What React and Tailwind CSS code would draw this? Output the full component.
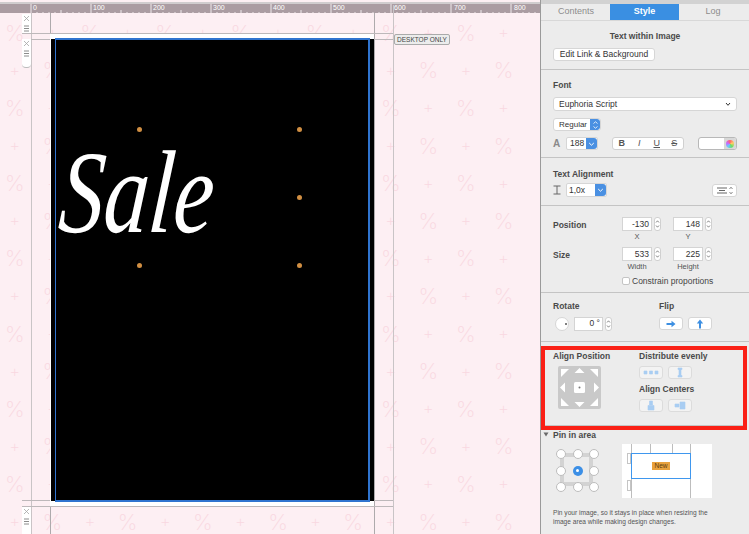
const font = { fontFamily: '"Liberation Sans", Arial, sans-serif' };

const Pattern = () => {
  const cells = [];
  for (let r = 0; r < 14; r++) {
    for (let c = 0; c < 14; c++) {
      cells.push((r + c) % 2 === 0 ? "%" : "+");
    }
  }
  return (
    <div
      className="absolute left-[-4px] top-[14px] grid grid-cols-[repeat(14,37.6px)] auto-rows-[37.6px] place-items-center font-extralight text-[#f9d8e1]"
      style={{ fontFamily: 'Inter, sans-serif' }}
    >
      {cells.map((ch, i) => (
        <span key={i} className={`leading-none ${ch === "%" ? "text-[22px]" : "text-[17px]"}`}>
          {ch}
        </span>
      ))}
    </div>
  );
};

const Ruler = () => {
  const labels = [0, 100, 200, 300, 400, 500, 600, 700, 800];
  const ticks = [];
  for (let i = 0; i < 90; i++) ticks.push(i);
  return (
    <div className="absolute left-0 top-[2px] h-[11px] w-[540px] overflow-hidden border-t-2 border-[#d0ccce] bg-[#ab9ca2]">
      <svg width="540" height="10" className="absolute left-0 top-0">
        {ticks.map((i) => (
          <line
            key={i}
            x1={31 + i * 6}
            x2={31 + i * 6}
            y1={i % 10 === 0 ? 0 : i % 5 === 0 ? 6 : 8}
            y2="10"
            stroke="#efe9eb"
            strokeWidth="1"
          />
        ))}
      </svg>
      {labels.map((l) => (
        <span
          key={l}
          className={`absolute top-0 text-[7px] leading-[7px] text-white ${
            l === 0 ? "left-[33px]" : l === 100 ? "left-[93px]" : l === 200 ? "left-[153px]" : l === 300 ? "left-[213px]" : l === 400 ? "left-[273px]" : l === 500 ? "left-[333px]" : l === 600 ? "left-[394px]" : l === 700 ? "left-[454px]" : "left-[514px]"
          }`}
        >
          {l}
        </span>
      ))}
    </div>
  );
};

const Handle = ({ className }) => (
  <div className={`absolute left-[22px] flex w-[9px] flex-col items-center bg-white text-[#8a8a8a] ${className}`}>
    <svg width="7" height="7" viewBox="0 0 7 7" className="mt-[1px]">
      <path d="M1 1l5 5M6 1L1 6" stroke="#a5a5a5" strokeWidth="0.8" />
    </svg>
    <svg width="7" height="7" viewBox="0 0 7 7" className="mt-[3px]">
      <path d="M1 1h5M1 3.5h5M1 6h5" stroke="#8c8c8c" strokeWidth="1" />
    </svg>
  </div>
);

const Canvas = () => (
  <div className="relative h-[534px] w-[540px] overflow-hidden bg-[#fdeff3]">
    <Pattern />
    <Ruler />
    {/* guide lines */}
    <div className="absolute left-[31px] top-[13px] h-[521px] w-px bg-[#c9c4c6]" />
    <div className="absolute left-[393px] top-[5px] h-[529px] w-px bg-[#c9c4c6]" />
    <div className="absolute left-[50px] top-[13px] h-[521px] w-px bg-[#aeaaac]" />
    <div className="absolute left-[374px] top-[13px] h-[521px] w-px bg-[#aeaaac]" />
    <div className="absolute left-[22px] top-[33px] h-px w-[371px] bg-[#bdb8ba]" />
    <div className="absolute left-[22px] top-[39px] h-px w-[371px] bg-[#bdb8ba]" />
    <div className="absolute left-[22px] top-[500px] h-px w-[371px] bg-[#bdb8ba]" />
    <div className="absolute left-[22px] top-[506px] h-px w-[371px] bg-[#bdb8ba]" />
    {/* image area */}
    <div className="absolute left-[50px] top-[34px] h-[472px] w-[324px] bg-white" />
    <div className="absolute left-[51px] top-[39px] h-[462px] w-[323px] bg-black" />
    <div className="absolute left-[55px] top-[38px] h-[464px] w-[315px] border-t-2 border-r-2 border-b-2 border-l border-[#2f74cf]" />
    <span
      className="absolute left-[60px] top-[118px] origin-left -skew-x-6 scale-x-[0.76] text-[118px] leading-[150px] text-white italic"
      style={{ fontFamily: '"Liberation Serif", serif' }}
    >
      Sale
    </span>
    {[
      "left-[137px] top-[127px]",
      "left-[297px] top-[127px]",
      "left-[297px] top-[195px]",
      "left-[137px] top-[263px]",
      "left-[297px] top-[263px]",
    ].map((c) => (
      <div key={c} className={`absolute h-[5px] w-[5px] rounded-full bg-[#d18f43] ${c}`} />
    ))}
    <Handle className="top-[14px] h-[19px]" />
    <Handle className="top-[39px] h-[29px] rounded-b-sm border-b border-[#bbb]" />
    <Handle className="top-[507px] h-[27px]" />
    <div className="absolute left-[394px] top-[34px] flex h-[11px] w-[56px] items-center justify-center rounded-[2px] border border-[#aaa] bg-[#ececec] text-[6.5px] text-[#444]">
      DESKTOP ONLY
    </div>
  </div>
);

const Label = ({ children, className = "" }) => (
  <div className={`text-[8.5px] leading-[10px] font-bold text-[#4a4a4a] ${className}`}>{children}</div>
);

const Field = ({ value, className = "" }) => (
  <div className={`flex h-[14px] items-center justify-end border border-[#d4d4d4] bg-white pr-[2px] text-[8.5px] text-[#333] ${className}`}>
    {value}
  </div>
);

const Stepper = () => (
  <div className="ml-[2px] flex h-[14px] w-[7px] flex-col items-center justify-center rounded-[3px] border border-[#d0d0d0] bg-white">
    <svg width="5" height="10" viewBox="0 0 5 10">
      <path d="M1 3.5L2.5 1.8 4 3.5M1 6.5L2.5 8.2 4 6.5" fill="none" stroke="#555" strokeWidth="0.7" />
    </svg>
  </div>
);

const BlueCap = ({ w = "w-[11px]", updown }) => (
  <div className={`flex h-full ${w} items-center justify-center rounded-r-[3px] bg-[#4a90e2]`}>
    <svg width="7" height="10" viewBox="0 0 7 10">
      {updown ? (
        <path d="M1.5 3.5L3.5 1.8l2 1.7M1.5 6.5l2 1.7 2-1.7" fill="none" stroke="#fff" strokeWidth="0.8" />
      ) : (
        <path d="M1.2 4l2.3 2.2L5.8 4" fill="none" stroke="#fff" strokeWidth="1" />
      )}
    </svg>
  </div>
);

const WhiteBtn = ({ children, className = "" }) => (
  <div className={`flex items-center justify-center rounded-[3px] border border-[#d6d6d6] bg-white ${className}`}>
    {children}
  </div>
);

const AlignGrid = () => (
  <div className="ml-[5px] mt-[5px] h-[43px] w-[43px] rounded-[2px] bg-[#c9c9c9]">
    <svg width="43" height="43" viewBox="0 0 43 43">
      <g fill="#fff">
        <path d="M3 3h8l-8 8zM40 3h-8l8 8zM3 40h8l-8-8zM40 40h-8l8-8z" />
        <path d="M21.5 2l5 5h-10zM21.5 41l5-5h-10zM2 21.5l5-5v10zM41 21.5l-5-5v10z" />
        <rect x="16" y="16" width="11" height="11" rx="1.5" />
      </g>
      <circle cx="21.5" cy="21.5" r="1" fill="#777" />
    </svg>
  </div>
);

const DistBtn = ({ d }) => (
  <WhiteBtn className="h-[13px] w-[24px] border-[#dcdcdc] !bg-[#f3f3f3]">
    <svg width="16" height="11" viewBox="0 0 16 11">
      <path d={d} fill="#a9cdf2" stroke="#a9cdf2" strokeWidth="0.6" />
    </svg>
  </WhiteBtn>
);

const PinGrid = () => (
  <div className="relative h-[42px] w-[42px]">
    <div className="absolute left-[4px] top-[4px] h-[33px] w-[33px] border-[4px] border-[#d3d3d3]" />
    <div className="relative grid grid-cols-[repeat(3,9px)] auto-rows-[9px] gap-[7.5px]">
      {[0, 1, 2, 3, 4, 5, 6, 7, 8].map((i) =>
        i === 4 ? (
          <div key={i} className="flex h-[10px] w-[10px] items-center justify-center rounded-full bg-[#3c8fe6]">
            <div className="h-[3px] w-[3px] rounded-full bg-white" />
          </div>
        ) : (
          <div key={i} className="h-[10px] w-[10px] rounded-full border border-[#bdbdbd] bg-white" />
        )
      )}
    </div>
  </div>
);

const PinPreview = () => (
  <div className="relative h-[54px] w-[90px] bg-white">
    <div className="absolute left-[9px] top-0 h-full w-px bg-[#bdbdbd]" />
    <div className="absolute left-[68px] top-0 h-full w-px bg-[#bdbdbd]" />
    <div className="absolute left-[28px] top-0 h-[9px] w-px bg-[#bdbdbd]" />
    <div className="absolute left-[50px] top-0 h-[9px] w-px bg-[#bdbdbd]" />
    <div className="absolute left-[5px] top-[9px] h-[11px] w-[4px] border border-[#c5c5c5]" />
    <div className="absolute left-[5px] top-[36px] h-[11px] w-[4px] border border-[#c5c5c5]" />
    <div className="absolute left-[9px] top-[9px] flex h-[26px] w-[60px] items-center justify-center border border-[#3f97ee]">
      <span className="bg-[#e8a13d] px-[2px] text-[6.5px] leading-[8px] text-[#5a3c10]">New</span>
    </div>
  </div>
);

const Panel = () => (
  <div className="h-[534px] w-[209px] overflow-hidden border-l border-[#9a9a9a] bg-[#ececec] text-[#444]">
    {/* tabs */}
    <div className="flex h-[21px] border-t-[4px] border-b border-t-[#d2d2d2] border-b-[#d8d8d8] pl-px text-[9px]">
      <div className="flex w-[68px] items-center justify-center text-[#8c8c8c]">Contents</div>
      <div className="flex w-[69px] items-center justify-center bg-[#3a8fe2] font-bold text-white">Style</div>
      <div className="flex w-[68px] items-center justify-center text-[#8c8c8c]">Log</div>
    </div>

    {/* text within image */}
    <div className="h-[49px] border-b border-[#c4c4c4] pl-[12px] pt-[10px]">
      <Label className="w-[184px] text-center">Text within Image</Label>
      <WhiteBtn className="mt-[7px] h-[13px] w-[102px] text-[8.5px] text-[#333]">Edit Link &amp; Background</WhiteBtn>
    </div>

    {/* font */}
    <div className="h-[88px] border-b border-[#c4c4c4] pl-[12px] pt-[10px]">
      <Label>Font</Label>
      <WhiteBtn className="mt-[7px] h-[14px] w-[184px] !justify-between px-[5px] text-[8.5px] text-[#333]">
        <span>Euphoria Script</span>
        <svg width="6" height="5" viewBox="0 0 6 5">
          <path d="M1 1l2 2.3L5 1" fill="none" stroke="#333" strokeWidth="1" />
        </svg>
      </WhiteBtn>
      <div className="mt-[7px] flex h-[13px] w-[48px] items-center overflow-hidden rounded-[3px] border border-[#d6d6d6] bg-white pl-[5px] text-[8px] text-[#333]">
        <span className="flex-1">Regular</span>
        <BlueCap w="w-[10px]" updown />
      </div>
      <div className="mt-[6px] flex h-[13px] items-center">
        <span className="w-[13px] text-[10px] font-bold text-[#8a8a8a]">A</span>
        <div className="flex h-[13px] w-[32px] items-center overflow-hidden rounded-[2px] border border-[#d6d6d6] bg-white pl-[3px] text-[8.5px] text-[#333]">
          <span className="flex-1">188</span>
          <BlueCap />
        </div>
        <div className="ml-[14px] flex h-[13px] w-[72px] items-center rounded-[3px] border border-[#d0d0d0] bg-white text-[9px] text-[#555]">
          <span className="flex-1 text-center font-bold">B</span>
          <span className="flex-1 text-center italic">I</span>
          <span className="flex-1 text-center underline">U</span>
          <span className="flex-1 text-center line-through">S</span>
        </div>
        <div className="ml-[14px] flex h-[13px] w-[39px] items-center overflow-hidden rounded-[3px] border border-[#b8b8b8] bg-white">
          <div className="flex-1" />
          <div className="flex h-full w-[12px] items-center justify-center bg-[#d8d8d8]">
            <div className="h-[8px] w-[8px] rounded-full bg-[conic-gradient(#f66,#fc6,#6d6,#6cf,#c6f,#f66)]" />
          </div>
        </div>
      </div>
    </div>

    {/* text alignment */}
    <div className="h-[48px] border-b border-[#c4c4c4] pl-[12px] pt-[11px]">
      <Label>Text Alignment</Label>
      <div className="mt-[4px] flex h-[14px] items-center">
        <svg width="13" height="10" viewBox="0 0 13 10" className="shrink-0">
          <path d="M0.5 1h7M0.5 9h7M4 1v8" stroke="#666" strokeWidth="1" fill="none" />
        </svg>
        <div className="flex h-[14px] w-[41px] items-center overflow-hidden rounded-[2px] border border-[#d6d6d6] bg-white pl-[2px] text-[8.5px] text-[#333]">
          <span className="flex-1">1,0x</span>
          <BlueCap />
        </div>
        <WhiteBtn className="ml-[105px] h-[13px] w-[25px] gap-[2px]">
          <svg width="10" height="7" viewBox="0 0 10 7">
            <path d="M0 1h10M2 3.5h6M0 6h10" stroke="#666" strokeWidth="1.2" />
          </svg>
          <svg width="4" height="9" viewBox="0 0 4 9">
            <path d="M0.5 3L2 1.2 3.5 3M0.5 6L2 7.8 3.5 6" fill="none" stroke="#555" strokeWidth="0.7" />
          </svg>
        </WhiteBtn>
      </div>
    </div>

    {/* position and size */}
    <div className="h-[87px] border-b border-[#c4c4c4] pl-[12px] pt-[11px]">
      <div className="flex">
        <Label className="w-[69px] pt-[3px]">Position</Label>
        <div>
          <div className="flex">
            <Field value="-130" className="w-[30px]" />
            <Stepper />
            <Field value="148" className="ml-[12px] w-[30px]" />
            <Stepper />
          </div>
          <div className="mt-[1px] flex text-[7.5px] leading-[10px] text-[#555]">
            <span className="w-[30px] text-center">X</span>
            <span className="ml-[21px] w-[30px] text-center">Y</span>
          </div>
        </div>
      </div>
      <div className="mt-[5px] flex">
        <Label className="w-[69px] pt-[3px]">Size</Label>
        <div>
          <div className="flex">
            <Field value="533" className="w-[30px]" />
            <Stepper />
            <Field value="225" className="ml-[12px] w-[30px]" />
            <Stepper />
          </div>
          <div className="mt-[1px] flex text-[7.5px] leading-[10px] text-[#555]">
            <span className="w-[30px] text-center">Width</span>
            <span className="ml-[21px] w-[30px] text-center">Height</span>
          </div>
          <div className="mt-[4px] flex items-center gap-[2px] text-[8.5px] leading-[10px] text-[#444]">
            <div className="h-[8px] w-[8px] rounded-[2px] border border-[#c4c4c4] bg-white" />
            <span>Constrain proportions</span>
          </div>
        </div>
      </div>
    </div>

    {/* rotate and flip */}
    <div className="h-[49px] border-b border-[#c4c4c4] pl-[12px] pt-[8px]">
      <div className="flex">
        <Label className="w-[106px]">Rotate</Label>
        <Label>Flip</Label>
      </div>
      <div className="mt-[5px] flex h-[15px] items-center">
        <div className="ml-[2px] flex h-[14px] w-[14px] items-center justify-end rounded-full border border-[#d6d6d6] bg-white pr-[1px]">
          <div className="h-[2px] w-[2px] rounded-full bg-[#555]" />
        </div>
        <Field value="0 °" className="ml-[5px] w-[29px]" />
        <Stepper />
        <WhiteBtn className="ml-[47px] h-[13px] w-[24px]">
          <svg width="10" height="8" viewBox="0 0 10 8">
            <path d="M0.5 3h5V0.8L9.5 4l-4 3.2V5h-5z" fill="#3d8fe2" />
          </svg>
        </WhiteBtn>
        <WhiteBtn className="ml-[5px] h-[13px] w-[24px]">
          <svg width="8" height="10" viewBox="0 0 8 10">
            <path d="M3 9.5v-5H0.8L4 0.5l3.2 4H5v5z" fill="#3d8fe2" />
          </svg>
        </WhiteBtn>
      </div>
    </div>

    {/* align, highlighted in red */}
    <div className="mt-[4px] h-[84px] w-[206px] border-[4px] border-[#fa2016]">
      <div className="flex h-full border-b border-[#c4c4c4] pl-[8px]">
        <div className="w-[86px] pt-px">
          <Label>Align Position</Label>
          <AlignGrid />
        </div>
        <div className="pt-px">
          <Label>Distribute evenly</Label>
          <div className="mt-[5px] flex gap-[5px]">
            <DistBtn d="M1 4h3v3H1zM6.5 4h3v3h-3zM12 4h3v3h-3z" />
            <DistBtn d="M6 1h4v1.5H6zM7 2.5h2v6H7zM6 8.5h4V10H6z" />
          </div>
          <Label className="mt-[5px]">Align Centers</Label>
          <div className="mt-[5px] flex gap-[5px]">
            <DistBtn d="M6.5 1h3v4h-3zM5 5.5h6V10H5z" />
            <DistBtn d="M3 4h4v3H3zM8 2h5v7H8z" />
          </div>
        </div>
      </div>
    </div>

    {/* pin in area */}
    <div className="pl-[2px]">
      <div className="flex items-center gap-[2px]">
        <svg width="7" height="6" viewBox="0 0 7 6">
          <path d="M0.5 0.5h5l-2.5 4z" fill="#6a6a6a" />
        </svg>
        <Label className="ml-[1px]">Pin in area</Label>
      </div>
      <div className="mt-[4px] flex">
        <div className="ml-[13px] mt-[5px]">
          <PinGrid />
        </div>
        <div className="ml-[24px]">
          <PinPreview />
        </div>
      </div>
      <p className="ml-[10px] mt-[10px] w-[160px] text-[6.6px] leading-[9px] text-[#555]">
        Pin your image, so it stays in place when resizing the image area while making design changes.
      </p>
    </div>
  </div>
);

export default function App() {
  return (
    <div className="flex h-[534px] w-[749px] overflow-hidden bg-white" style={font}>
      <Canvas />
      <Panel />
    </div>
  );
}
